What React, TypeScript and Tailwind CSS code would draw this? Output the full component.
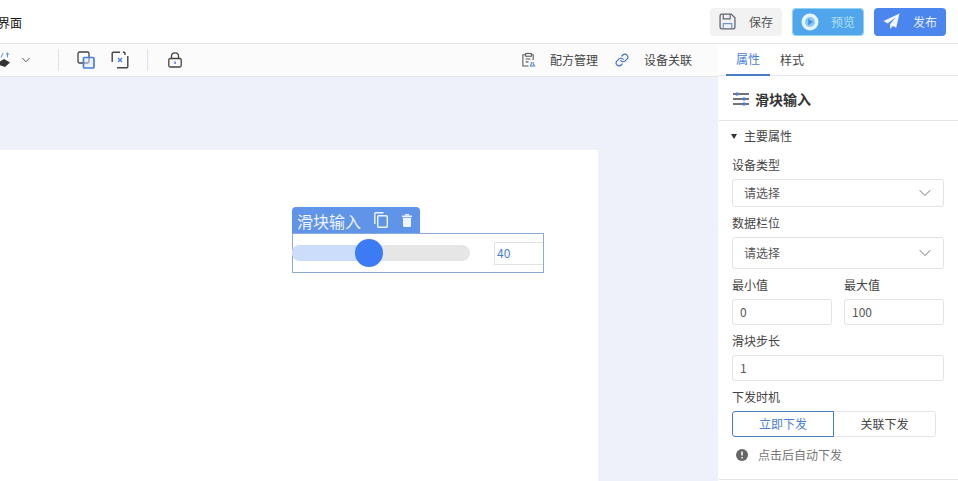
import { ChevronDown, Link } from 'lucide-react';

const font = { fontFamily: '"Noto Sans CJK SC", "Liberation Sans", sans-serif' };

const Label = ({ children }: { children: string }) => (
    <div className="h-[20px] leading-[20px] text-[12px] text-[#444]">{children}</div>
);

const SelectBox = ({ h }: { h: string }) => (
    <div className={`${h} mt-[4px] flex items-center justify-between rounded-[3px] border border-[#e3e3e3] pl-[11px] pr-[8px] text-[12px] text-[#555]`}>
        <span>请选择</span>
        <ChevronDown className="w-[20px] h-[20px] text-[#666]" strokeWidth={1.1} />
    </div>
);

const InputBox = ({ value, className }: { value: string; className: string }) => (
    <div className={`${className} h-[26px] flex items-center rounded-[3px] border border-[#e3e3e3] pl-[7px] text-[12px] text-[#555]`}>{value}</div>
);

export default function App() {
    return (
        <div className="w-[958px] h-[481px] overflow-hidden flex flex-col bg-white" style={font}>
            <header className="h-[44px] shrink-0 flex items-center justify-between border-b border-[#e2e2e2] pr-[12px]">
                <span className="-ml-[2px] mt-[3px] text-[12px] text-[#111]">界面</span>
                <div className="flex items-center gap-[10px]">
                    <button className="w-[72px] h-[28px] flex items-center justify-center gap-[13px] rounded-[4px] bg-[#f2f2f3] text-[12px] text-[#555]">
                        <svg viewBox="0 0 16 16" className="w-[17px] h-[17px]" fill="none">
                            <path d="M2.5 1 H11.5 L15 4.5 V13.5 A1.5 1.5 0 0 1 13.5 15 H2.5 A1.5 1.5 0 0 1 1 13.5 V2.5 A1.5 1.5 0 0 1 2.5 1 Z" stroke="#5c6270" strokeWidth="1.2" />
                            <path d="M4 1.5 V5.5 H10.5 V1.5" stroke="#5c6270" strokeWidth="1.1" />
                            <path d="M4 15 V10 H12 V15" stroke="#6b8fd0" strokeWidth="1.1" />
                        </svg>
                        保存
                    </button>
                    <button className="w-[72px] h-[28px] flex items-center justify-center gap-[12px] rounded-[4px] bg-[#4fa6ec] border border-[#8fd3f5] text-[12px] text-[#b4e0f5]">
                        <svg viewBox="0 0 18 18" className="w-[18px] h-[18px]">
                            <circle cx="9" cy="9" r="8.5" fill="#e8f4fb" />
                            <circle cx="9" cy="9" r="5" fill="#8cc8f2" />
                            <path d="M7.2 5.8 L12.2 9 L7.2 12.2 Z" fill="#3f95e2" />
                        </svg>
                        预览
                    </button>
                    <button className="w-[72px] h-[28px] flex items-center justify-center gap-[13px] rounded-[4px] bg-[#4a86ee] text-[12px] text-[#e4edfc]">
                        <svg viewBox="0 0 18 18" className="w-[17px] h-[17px]">
                            <path d="M17.5 0.5 L0.5 8.5 L5 11 L13.5 4.5 L7.5 12 L7.5 17 L10.5 13.8 L14 15.5 Z" fill="#f2f6fe" />
                        </svg>
                        发布
                    </button>
                </div>
            </header>

            <div className="flex-1 flex min-h-0">
                <main className="w-[718px] shrink-0 flex flex-col min-w-0">
                    <div className="h-[33px] shrink-0 flex items-center justify-between border-b border-[#e6e6e6] bg-[#fbfbfb] pr-[26px]">
                        <div className="flex items-center">
                            <svg viewBox="0 0 11 16" className="w-[11px] h-[16px]">
                                <path d="M-1 10 L4 7 L10 10.5 L5 15 L-1 13 Z" fill="#333" />
                                <path d="M3 1 L1 5.5 M7.5 5.5 V1 M5.8 2.6 L7.5 1 L9.2 2.6" stroke="#5f8fe0" strokeWidth="1" fill="none" />
                            </svg>
                            <ChevronDown className="ml-[8px] w-[14px] h-[14px] text-[#444]" strokeWidth={1.5} />
                            <div className="ml-[25px] w-px h-[22px] bg-[#dde3ee]" />
                            <svg viewBox="0 0 18 18" className="ml-[18px] w-[18px] h-[18px]" fill="none" strokeWidth="1.3">
                                <rect x="1" y="1" width="11" height="11" rx="1.5" stroke="#444" />
                                <rect x="6.5" y="6.5" width="10.5" height="10.5" rx="1" fill="#dce7fa" fillOpacity="0.5" stroke="#4a7fd8" strokeWidth="1.7" />
                            </svg>
                            <svg viewBox="0 0 18 18" className="ml-[16px] w-[18px] h-[18px]" fill="none" strokeWidth="1.4">
                                <path d="M9 1.2 H2.2 A1 1 0 0 0 1.2 2.2 V11 M12 1.2 H13 A1 1 0 0 1 14 2.2 V4 M6 16.8 H15.8 A1 1 0 0 0 16.8 15.8 V5" stroke="#444" />
                                <path d="M7 7 L11 11 M11 7 L7 11" stroke="#4a7fd8" />
                            </svg>
                            <div className="ml-[18px] w-px h-[22px] bg-[#dde3ee]" />
                            <svg viewBox="0 0 16 16" className="ml-[19px] w-[16px] h-[16px]" fill="none">
                                <rect x="1.8" y="6.5" width="12.4" height="8.5" rx="1.5" stroke="#444" strokeWidth="1.3" />
                                <path d="M4.5 6.5 V4 A3.5 3.2 0 0 1 11.5 4 V6.5" stroke="#444" strokeWidth="1.3" />
                                <rect x="7.2" y="9.5" width="1.6" height="2.4" fill="#4a7fd8" />
                            </svg>
                        </div>
                        <div className="flex items-center text-[12px] text-[#444]">
                            <svg viewBox="0 0 16 16" className="w-[15px] h-[16px]" fill="none" stroke="#555" strokeWidth="1.1">
                                <path d="M11 2.5 H13 V8 M5 2.5 H2 V14.5 H8" />
                                <rect x="5" y="1" width="6" height="3" />
                                <path d="M5 7 H10 M5 10 H8" />
                                <path d="M11 10 V12 L10 14.5 H14.5 L13 12 V10" stroke="#4a7fd8" />
                            </svg>
                            <span className="ml-[14px]">配方管理</span>
                            <Link className="ml-[17px] w-[14px] h-[14px] text-[#3f6fc8]" strokeWidth={2} />
                            <span className="ml-[15px]">设备关联</span>
                        </div>
                    </div>

                    <div className="relative flex-1 bg-[#eef1f9] overflow-hidden">
                        <div className="absolute left-0 top-[73px] w-[598px] h-[340px] bg-white" />
                        {/* widget sits on the free canvas */}
                        <div className="absolute left-[292px] top-[130px] w-[252px]">
                            <div className="w-[128px] h-[26px] flex items-center pl-[5px] rounded-t-[4px] bg-[#6094e8] text-[16px] text-[#f0f5fe]">
                                <span className="mt-[2px]">滑块输入</span>
                                <svg viewBox="0 0 14 16" className="ml-[13px] w-[14px] h-[16px]" fill="none" stroke="#f0f5fe" strokeWidth="1.4">
                                    <rect x="3.7" y="3.7" width="9.6" height="11.6" rx="1" />
                                    <path d="M0.8 12 V1.8 A1 1 0 0 1 1.8 0.8 H9.5" />
                                </svg>
                                <svg viewBox="0 0 10 13" className="ml-[14px] w-[10px] h-[13px]" fill="#f0f5fe">
                                    <rect x="3" y="0" width="4" height="1.5" />
                                    <rect x="0" y="1.5" width="10" height="1.8" rx="0.5" />
                                    <path d="M1 4 H9 V11.5 A1.5 1.5 0 0 1 7.5 13 H2.5 A1.5 1.5 0 0 1 1 11.5 Z" />
                                </svg>
                            </div>
                            <div className="h-[40px] flex items-center border border-[#8aaad8]">
                                <div className="relative -ml-px w-[178px] h-[16px] rounded-full bg-[#e6e6e6]">
                                    <div className="w-[78px] h-full rounded-l-full bg-[#ccdcfb]" />
                                    <div className="absolute left-[63px] -top-[6px] w-[28px] h-[28px] rounded-full bg-[#3d7bf5]" />
                                </div>
                                <div className="ml-[24px] w-[49px] h-[23px] flex items-center pl-[2px] border border-r-0 border-[#e2e2e2] text-[12px] text-[#4a7ccc]">40</div>
                            </div>
                        </div>
                    </div>
                </main>

                <aside className="flex-1 min-w-0 flex flex-col bg-white">
                    <div className="h-[32px] shrink-0 flex border-b border-[#e8e8e8] text-[12px]">
                        <div className="w-[44px] h-[32px] flex items-center justify-center ml-[8px] border-b-2 border-[#4a7cc4] text-[#4a7fd8]">属性</div>
                        <div className="w-[44px] flex items-center justify-center text-[#444]">样式</div>
                    </div>
                    <div className="h-[45px] shrink-0 flex items-center ml-px border-b border-[#e4e4e4] pl-[14px] pt-[2px]">
                        <svg viewBox="0 0 16 16" className="w-[16px] h-[16px]">
                            <path d="M0 3 H16 M0 8 H16 M0 13 H16" stroke="#444" strokeWidth="1.3" />
                            <circle cx="4" cy="3" r="1.7" fill="#4a7fd8" />
                            <circle cx="11" cy="8" r="1.7" fill="#4a7fd8" />
                            <circle cx="11" cy="13" r="1.7" fill="#4a7fd8" />
                        </svg>
                        <span className="ml-[6px] text-[14px] font-bold text-[#333]">滑块输入</span>
                    </div>
                    <div className="px-[14px]">
                        <div className="h-[30px] flex items-center text-[12px] text-[#444]">
                            <span className="-ml-px w-0 h-0 border-x-[3.5px] border-x-transparent border-t-[5px] border-t-[#333]" />
                            <span className="ml-[7px]">主要属性</span>
                        </div>
                        <div className="mt-[4px]"><Label>设备类型</Label></div>
                        <SelectBox h="h-[28px]" />
                        <div className="mt-[6px]"><Label>数据栏位</Label></div>
                        <SelectBox h="h-[32px]" />
                        <div className="mt-[6px] flex gap-[12px]">
                            <div className="w-[100px]">
                                <Label>最小值</Label>
                                <InputBox value="0" className="mt-[4px] w-[100px]" />
                            </div>
                            <div className="w-[100px]">
                                <Label>最大值</Label>
                                <InputBox value="100" className="mt-[4px] w-[100px]" />
                            </div>
                        </div>
                        <div className="mt-[6px]"><Label>滑块步长</Label></div>
                        <InputBox value="1" className="mt-[4px] w-[212px]" />
                        <div className="mt-[6px]"><Label>下发时机</Label></div>
                        <div className="mt-[4px] flex w-[204px] h-[26px] text-[12px]">
                            <div className="w-[102px] flex items-center justify-center rounded-l-[3px] border border-[#4a7cc4] text-[#4a7fd8]">立即下发</div>
                            <div className="flex-1 flex items-center justify-center rounded-r-[3px] border border-l-0 border-[#e6e6e6] text-[#444]">关联下发</div>
                        </div>
                        <div className="mt-[8px] ml-[4px] h-[20px] flex items-center text-[12px] text-[#777]">
                            <svg viewBox="0 0 12 12" className="w-[12px] h-[12px]">
                                <circle cx="6" cy="6" r="6" fill="#666" />
                                <path d="M6 2.5 V6.5 M6 8 V9.5" stroke="#fff" strokeWidth="1.5" />
                            </svg>
                            <span className="ml-[10px]">点击后自动下发</span>
                        </div>
                    </div>
                    <div className="mt-[14px] ml-px border-t border-[#e4e4e4]" />
                </aside>
            </div>
        </div>
    );
}
